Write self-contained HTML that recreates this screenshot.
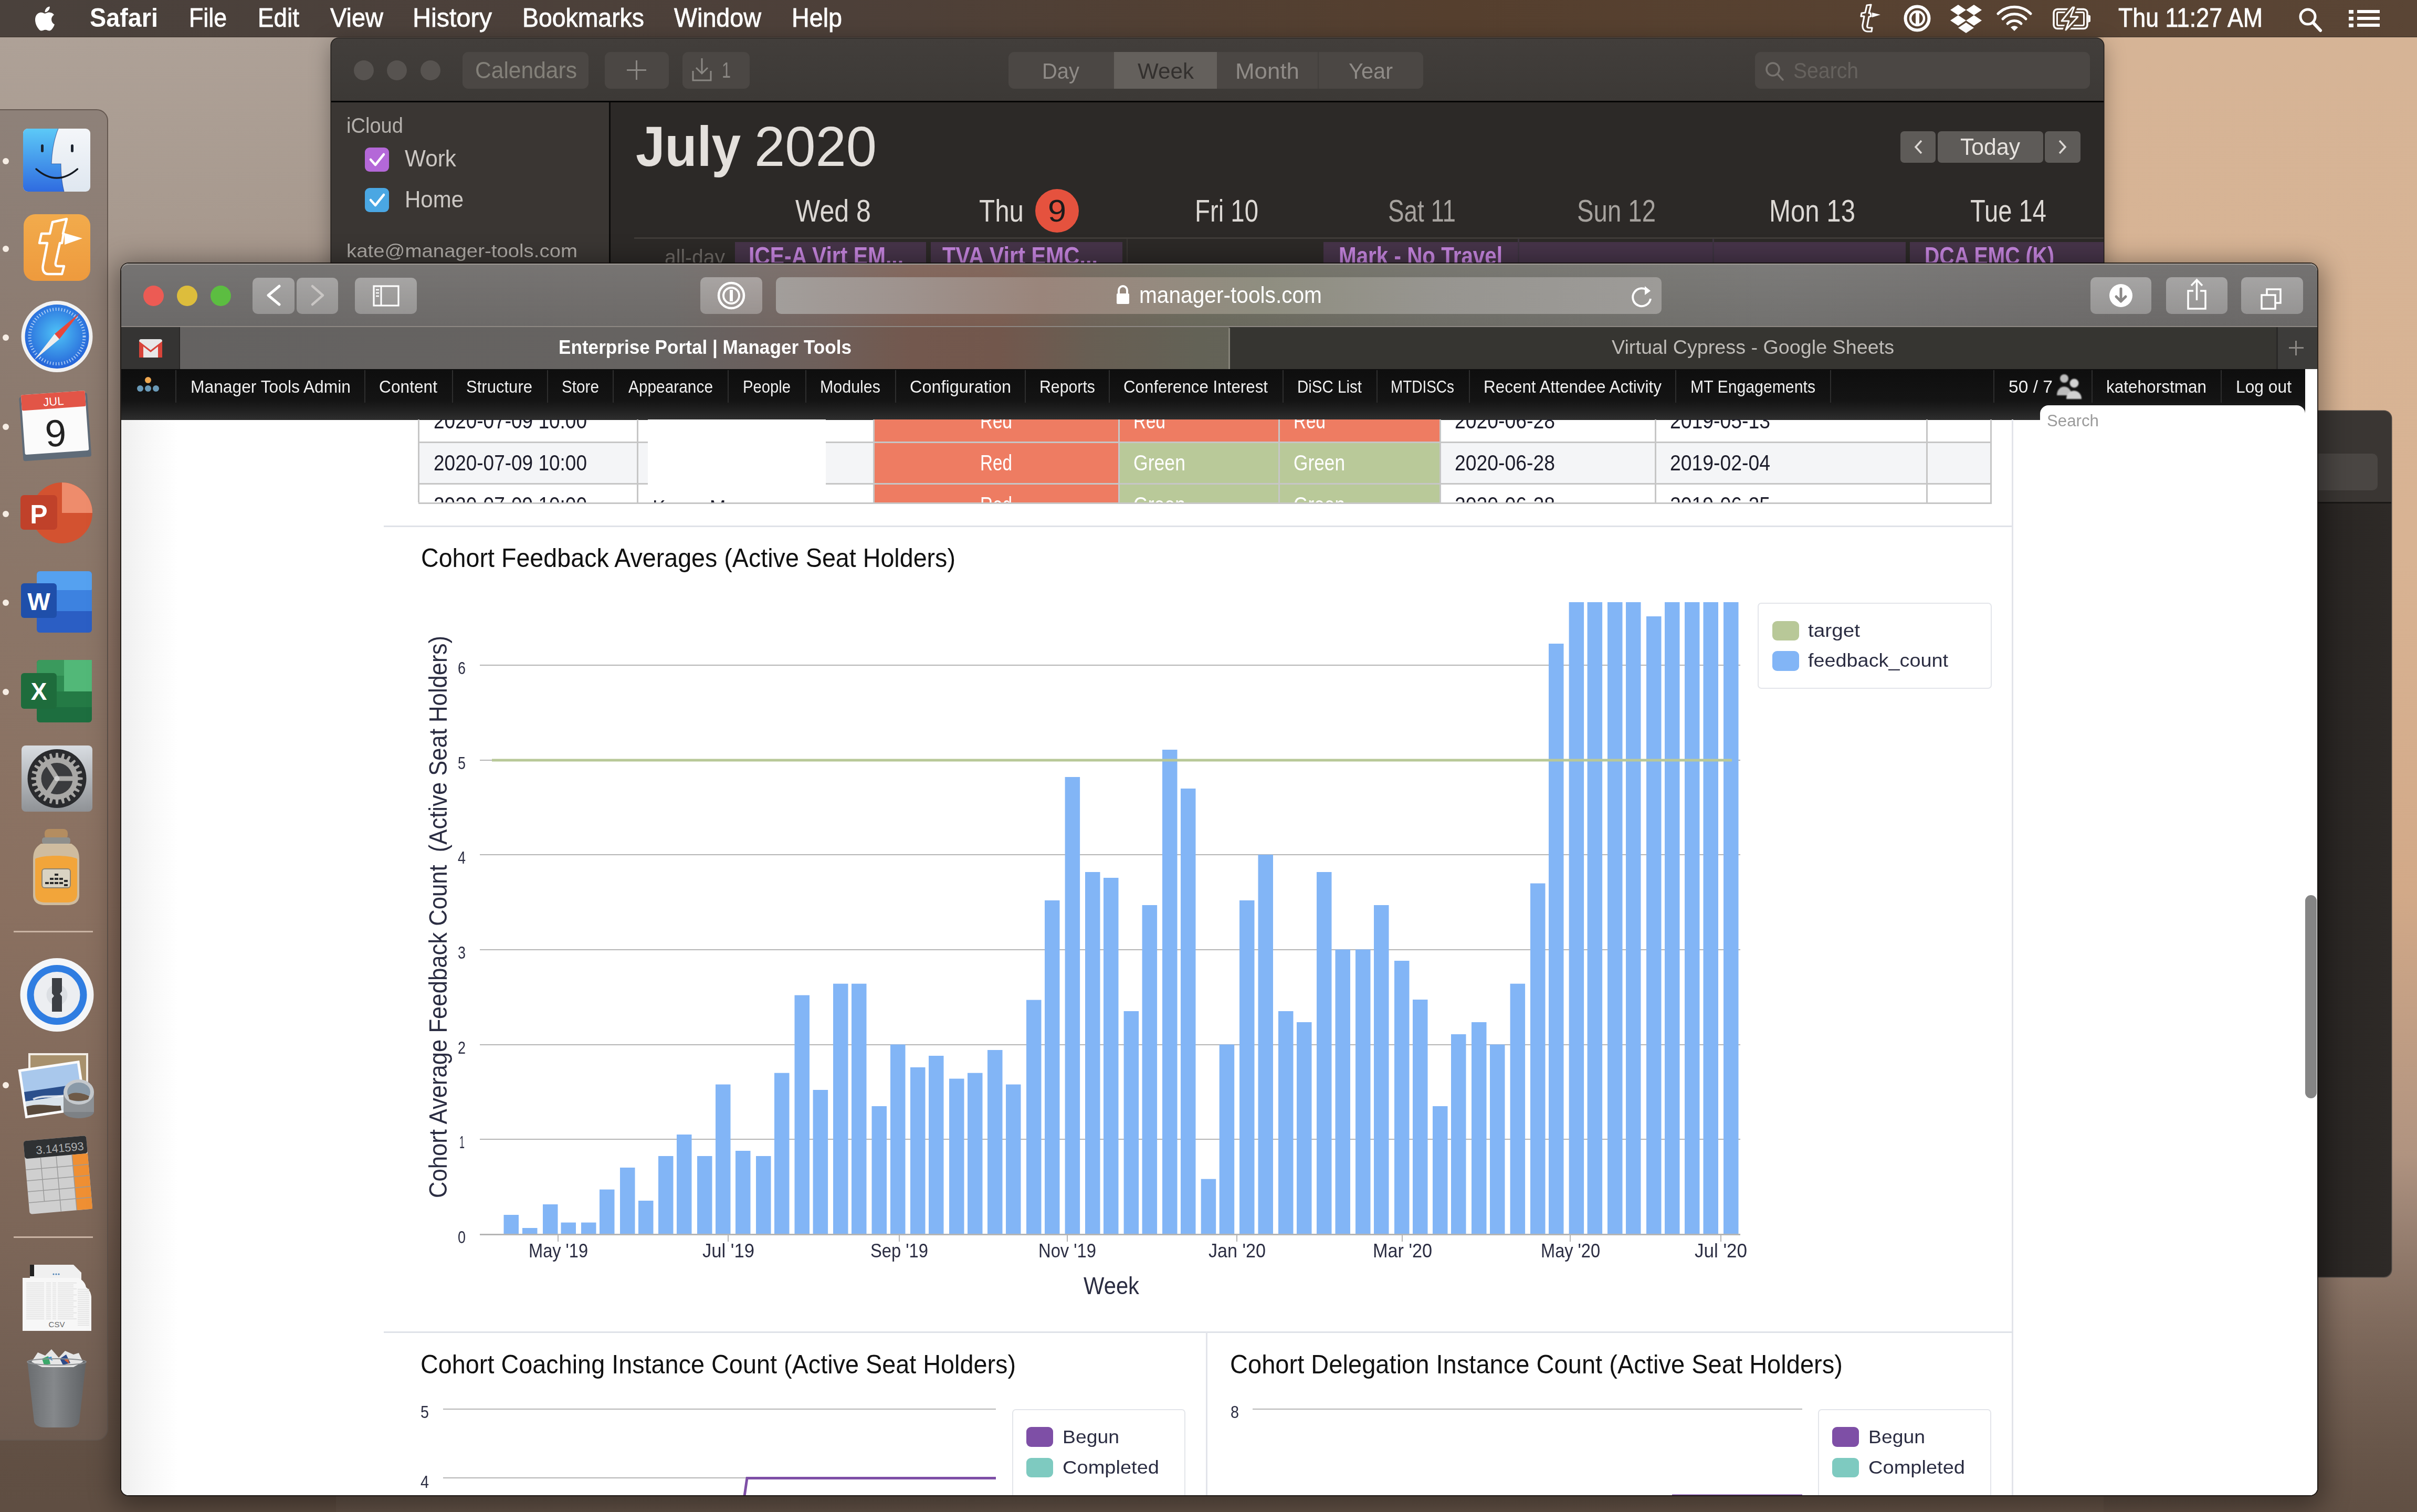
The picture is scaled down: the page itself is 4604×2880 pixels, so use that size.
<!DOCTYPE html><html><head><meta charset="utf-8"><style>*{margin:0;padding:0}html,body{width:4604px;height:2880px;overflow:hidden;background:#8a7a70}
.b{position:absolute}.t{position:absolute;white-space:pre;transform-origin:0 0;font-family:'Liberation Sans',sans-serif}</style></head><body><div class="b" style="left:0px;top:0px;width:4604px;height:2880px;background:linear-gradient(90deg,#a89a90 0%,#ad9e92 40%,#c4a68a 75%,#d2b090 100%);"></div><div class="b" style="left:0px;top:70px;width:640px;height:2810px;background:linear-gradient(180deg,#aea197 0%,#a89a8f 12%,#94796a 40%,#8a6e5e 60%,#7a6254 80%,#5e4d42 100%);"></div><div class="b" style="left:4007px;top:70px;width:597px;height:2810px;background:linear-gradient(180deg,#d6b496 0%,#d8b393 35%,#d2a988 58%,#a88e7e 80%,#7e6a5c 100%);"></div><div class="b" style="left:0px;top:2200px;width:4604px;height:680px;background:linear-gradient(180deg,rgba(90,70,58,0) 0%,rgba(100,82,70,0.5) 50%,rgba(95,78,66,0.95) 100%);"></div><div class="b" style="left:0px;top:0px;width:4604px;height:70px;background:linear-gradient(90deg,#4a413c 0%,#4d4039 35%,#553f2e 60%,#5a4535 100%);border-bottom:1px solid #3a302a;"></div><svg class="b" style="left:58px;top:6px" width="58" height="58" viewBox="0 0 50 50"><path fill="#fff" d="M34.5 26.6c0-5 4.1-7.4 4.3-7.5-2.3-3.4-5.9-3.9-7.2-3.9-3.1-.3-6 1.8-7.5 1.8-1.6 0-4-1.8-6.5-1.7-3.4 0-6.5 2-8.2 5-3.5 6.1-.9 15.1 2.5 20 1.7 2.4 3.6 5.1 6.2 5 2.5-.1 3.4-1.6 6.4-1.6s3.8 1.6 6.4 1.6c2.7 0 4.4-2.4 6-4.8 1.9-2.8 2.7-5.5 2.7-5.6-.1 0-5.1-2-5.1-8.3zM29.6 11.9c1.4-1.7 2.3-4 2.1-6.3-2 .1-4.4 1.3-5.8 3-1.3 1.5-2.4 3.9-2.1 6.2 2.2.2 4.4-1.1 5.8-2.9z"/></svg><div class="t" style="left:171.0px;top:9.0px;font-size:50.00px;line-height:50.00px;color:#fff;font-family:'Liberation Sans',sans-serif;font-weight:700;transform:scaleX(0.9355);">Safari</div><div class="t" style="left:360.0px;top:9.0px;font-size:50.00px;line-height:50.00px;color:#fff;font-family:'Liberation Sans',sans-serif;transform:scaleX(0.8935);-webkit-text-stroke:0.8px #fff;">File</div><div class="t" style="left:491.0px;top:9.0px;font-size:50.00px;line-height:50.00px;color:#fff;font-family:'Liberation Sans',sans-serif;transform:scaleX(0.9168);-webkit-text-stroke:0.8px #fff;">Edit</div><div class="t" style="left:629.0px;top:9.0px;font-size:50.00px;line-height:50.00px;color:#fff;font-family:'Liberation Sans',sans-serif;transform:scaleX(0.9397);-webkit-text-stroke:0.8px #fff;">View</div><div class="t" style="left:786.0px;top:9.0px;font-size:50.00px;line-height:50.00px;color:#fff;font-family:'Liberation Sans',sans-serif;transform:scaleX(0.9706);-webkit-text-stroke:0.8px #fff;">History</div><div class="t" style="left:995.0px;top:9.0px;font-size:50.00px;line-height:50.00px;color:#fff;font-family:'Liberation Sans',sans-serif;transform:scaleX(0.9277);-webkit-text-stroke:0.8px #fff;">Bookmarks</div><div class="t" style="left:1284.0px;top:9.0px;font-size:50.00px;line-height:50.00px;color:#fff;font-family:'Liberation Sans',sans-serif;transform:scaleX(0.9334);-webkit-text-stroke:0.8px #fff;">Window</div><div class="t" style="left:1508.0px;top:9.0px;font-size:50.00px;line-height:50.00px;color:#fff;font-family:'Liberation Sans',sans-serif;transform:scaleX(0.9335);-webkit-text-stroke:0.8px #fff;">Help</div><div class="t" style="left:4035.0px;top:9.0px;font-size:50.00px;line-height:50.00px;color:#fff;font-family:'Liberation Sans',sans-serif;transform:scaleX(0.8940);-webkit-text-stroke:0.8px #fff;">Thu 11:27 AM</div><svg class="b" style="left:3520px;top:0px" width="480" height="70" viewBox="0 0 480 70">
<g fill="none" stroke="#fff" stroke-width="3.2" stroke-linejoin="round">
<path d="M44 9 L36 10 L33 24 L26 25 L25 31 L31 31 L28 47 C27 55 31 60 38 60 L45 60 L46 53 L40 53 C37 53 36 51 37 48 L40 32 L44 31 L43 25 L40 25 Z"/>
</g>
<path fill="#fff" d="M46 24 L62 28 L46 33 Z"/>
<circle cx="132" cy="35" r="22.5" fill="none" stroke="#fff" stroke-width="6"/>
<circle cx="132" cy="35" r="13" fill="none" stroke="#fff" stroke-width="4.5"/>
<rect x="129" y="22" width="7" height="24" fill="#fff"/>
<g fill="#fff">
<path d="M195 19 L210 9 L225 19 L210 29 Z"/><path d="M225 19 L240 9 L255 19 L240 29 Z"/>
<path d="M195 39 L210 29 L225 39 L210 49 Z"/><path d="M225 39 L240 29 L255 39 L240 49 Z"/>
<path d="M210 53 L225 43 L240 53 L225 63 Z"/>
</g>
<g fill="none" stroke="#fff" stroke-width="5" stroke-linecap="round">
<path d="M286 26 A44 44 0 0 1 348 26"/><path d="M295 36 A31 31 0 0 1 339 36"/><path d="M304 45 A18 18 0 0 1 330 45"/>
</g>
<path fill="#fff" d="M310 52 L317 59 L324 52 A10 10 0 0 0 310 52 Z"/>
<rect x="392" y="17.5" width="64" height="37" rx="7" fill="none" stroke="#fff" stroke-width="3.5"/>
<rect x="398.5" y="23.5" width="51" height="25" rx="2.5" fill="none" stroke="#fff" stroke-width="3"/>
<path d="M428 12 L406 41 L420 41 L413 60 L440 31 L425 31 L433 12 Z" fill="#5a4432" stroke="#5a4432" stroke-width="9" stroke-linejoin="round"/>
<path d="M428 14 L407 40 L421 40 L415 57 L438 32 L424 32 L431 14 Z" fill="#5a4432" stroke="#fff" stroke-width="3" stroke-linejoin="round"/>
<path fill="#fff" d="M458 28 L462 30 L462 41 L458 43 Z"/>
</svg><svg class="b" style="left:4370px;top:0px" width="180" height="70" viewBox="0 0 180 70">
<circle cx="26" cy="32" r="14" fill="none" stroke="#fff" stroke-width="5"/>
<path d="M36 43 L50 58" stroke="#fff" stroke-width="6" stroke-linecap="round"/>
<g fill="#fff"><rect x="104" y="19" width="9" height="7"/><rect x="104" y="32" width="9" height="7"/><rect x="104" y="45" width="9" height="7"/>
<rect x="120" y="19" width="43" height="6"/><rect x="120" y="32" width="43" height="6"/><rect x="120" y="45" width="43" height="6"/></g>
</svg><div class="b" style="left:-20px;top:208px;width:226px;height:2536px;background:linear-gradient(180deg,#8e8179 0%,#8b7668 35%,#8a7060 60%,#7c6658 85%,#6e5c51 100%);border:2px solid #655850;border-radius:22px;box-sizing:border-box;"></div><div class="b" style="left:5px;top:301px;width:12px;height:12px;border-radius:6px;background:#f6ede4"></div><div class="b" style="left:5px;top:468px;width:12px;height:12px;border-radius:6px;background:#f6ede4"></div><div class="b" style="left:5px;top:637px;width:12px;height:12px;border-radius:6px;background:#f6ede4"></div><div class="b" style="left:5px;top:807px;width:12px;height:12px;border-radius:6px;background:#f6ede4"></div><div class="b" style="left:5px;top:973px;width:12px;height:12px;border-radius:6px;background:#f6ede4"></div><div class="b" style="left:5px;top:1142px;width:12px;height:12px;border-radius:6px;background:#f6ede4"></div><div class="b" style="left:5px;top:1312px;width:12px;height:12px;border-radius:6px;background:#f6ede4"></div><div class="b" style="left:5px;top:2061px;width:12px;height:12px;border-radius:6px;background:#f6ede4"></div><div class="b" style="left:26px;top:1773px;width:151px;height:3px;background:#c9b3a3;"></div><div class="b" style="left:26px;top:2355px;width:151px;height:3px;background:#c9b3a3;"></div><svg class="b" style="left:0px;top:0px" width="206" height="2744" viewBox="0 0 206 2744">
<defs>
<linearGradient id="fb" x1="0" y1="0" x2="0" y2="1"><stop offset="0" stop-color="#5cc9f7"/><stop offset="1" stop-color="#2f6be0"/></linearGradient>
<linearGradient id="fw" x1="0" y1="0" x2="0" y2="1"><stop offset="0" stop-color="#f4f6f9"/><stop offset="1" stop-color="#dfe7f0"/></linearGradient>
<linearGradient id="ty" x1="0" y1="0" x2="0" y2="1"><stop offset="0" stop-color="#f2ab4c"/><stop offset="1" stop-color="#ee9a3d"/></linearGradient>
<radialGradient id="sf" cx="0.5" cy="0.45" r="0.55"><stop offset="0" stop-color="#4fc3f7"/><stop offset="1" stop-color="#2563d8"/></radialGradient>
<linearGradient id="sp" x1="0" y1="0" x2="0" y2="1"><stop offset="0" stop-color="#d9dde2"/><stop offset="1" stop-color="#8f9296"/></linearGradient>
<linearGradient id="jar" x1="0" y1="0" x2="0" y2="1"><stop offset="0" stop-color="#e8dccb"/><stop offset="0.45" stop-color="#f3b646"/><stop offset="1" stop-color="#e4852a"/></linearGradient>
<linearGradient id="tr" x1="0" y1="0" x2="0" y2="1"><stop offset="0" stop-color="#8c8f93"/><stop offset="1" stop-color="#5d6064"/></linearGradient>
</defs>
<!-- finder -->
<rect x="44" y="245" width="128" height="120" rx="9" fill="url(#fw)"/>
<path d="M53 245 L111 245 C104 262 99 285 98 312 L116 312 C116 330 118 350 122 365 L53 365 A9 9 0 0 1 44 356 L44 254 A9 9 0 0 1 53 245 Z" fill="url(#fb)"/>
<path d="M111 245 C104 262 99 285 98 312 L116 312 C116 330 118 350 122 365" fill="none" stroke="#1f3c80" stroke-width="1.2" opacity="0.6"/>
<rect x="78" y="275" width="5" height="15" rx="2.5" fill="#1c2430"/><rect x="135" y="275" width="5" height="15" rx="2.5" fill="#1c2430"/>
<path d="M69 322 Q108 356 147.5 322" fill="none" stroke="#141a22" stroke-width="3.5" stroke-linecap="round"/>
<!-- tyme -->
<rect x="45" y="408" width="127" height="127" rx="22" fill="url(#ty)"/>
<path d="M100 423 L127 417 L120 445 L121 445 L118 463 L114 463 L106 500 C105 506 107 507 111 507 L122 507 L118 522 L92 522 C84 522 80 515 82 505 L90 463 L75 463 L79 445 L95 445 Z" fill="none" stroke="#fff" stroke-width="4.5" stroke-linejoin="round"/>
<path d="M123 444 L157 454 L123 466 Z" fill="#fff"/>
<!-- safari -->
<circle cx="108.5" cy="641" r="68" fill="#f2f2f2"/><circle cx="108.5" cy="641" r="61" fill="url(#sf)"/>
<circle cx="108.5" cy="641" r="52" fill="none" stroke="#e8f4ff" stroke-width="6" stroke-dasharray="1.5 4" opacity="0.8"/>
<path d="M152 596 L113 646 L104 636 Z" fill="#e8473a"/><path d="M65 686 L104 636 L113 646 Z" fill="#eeeeee"/>
<!-- calendar -->
<g transform="rotate(-4 106 810)">
<rect x="40" y="752" width="130" height="122" rx="4" fill="#5f6b78"/>
<rect x="44" y="748" width="122" height="114" rx="3" fill="#fbfbfb"/>
<rect x="44" y="748" width="122" height="30" rx="3" fill="#e25547"/>
<text x="105" y="772" font-family="Liberation Sans" font-size="22" fill="#fff" text-anchor="middle">JUL</text>
<text x="105" y="850" font-family="Liberation Sans" font-size="72" fill="#222" text-anchor="middle">9</text>
</g>
<!-- powerpoint -->
<circle cx="118" cy="977" r="58" fill="#d35230"/>
<path d="M118 919 A58 58 0 0 1 176 977 L118 977 Z" fill="#ee8c6c"/>
<rect x="39" y="943" width="70" height="66" rx="7" fill="#c0412a"/>
<text x="74" y="997" font-family="Liberation Sans" font-weight="700" font-size="50" fill="#fff" text-anchor="middle">P</text>
<!-- word -->
<rect x="70" y="1088" width="105" height="117" rx="6" fill="#2b5ec4"/>
<rect x="70" y="1088" width="105" height="40" rx="6" fill="#55a1f0"/><rect x="70" y="1124" width="105" height="40" fill="#3d82e0"/>
<rect x="40" y="1111" width="68" height="66" rx="6" fill="#1f4faa"/>
<text x="74" y="1162" font-family="Liberation Sans" font-weight="700" font-size="46" fill="#fff" text-anchor="middle">W</text>
<!-- excel -->
<rect x="70" y="1257" width="105" height="119" rx="6" fill="#1d6e3f"/>
<rect x="70" y="1257" width="105" height="30" rx="6" fill="#3a9a5d"/><rect x="122" y="1257" width="53" height="60" fill="#52b878"/><rect x="70" y="1287" width="52" height="30" fill="#2d8a50"/><rect x="70" y="1317" width="105" height="30" fill="#247a45"/>
<rect x="40" y="1282" width="68" height="68" rx="6" fill="#1e6c3c"/>
<text x="74" y="1333" font-family="Liberation Sans" font-weight="700" font-size="46" fill="#fff" text-anchor="middle">X</text>
<!-- system prefs -->
<rect x="41" y="1420" width="135" height="126" rx="8" fill="url(#sp)"/>
<circle cx="108.5" cy="1483" r="56" fill="#2a2b2e"/>
<path d="M148.2 1477.8 L148.4 1480.1 L157.5 1480.9 L157.5 1485.1 L148.4 1485.9 L148.2 1488.2 L147.8 1490.5 L156.3 1493.7 L155.3 1497.7 L146.3 1496.2 L145.5 1498.3 L144.5 1500.4 L151.9 1505.7 L149.9 1509.3 L141.6 1505.5 L140.2 1507.4 L138.8 1509.1 L144.6 1516.2 L141.7 1519.1 L134.6 1513.3 L132.9 1514.7 L131.0 1516.1 L134.8 1524.4 L131.2 1526.4 L125.9 1519.0 L123.8 1520.0 L121.7 1520.8 L123.2 1529.8 L119.2 1530.8 L116.0 1522.3 L113.7 1522.7 L111.4 1522.9 L110.6 1532.0 L106.4 1532.0 L105.6 1522.9 L103.3 1522.7 L101.0 1522.3 L97.8 1530.8 L93.8 1529.8 L95.3 1520.8 L93.2 1520.0 L91.1 1519.0 L85.8 1526.4 L82.2 1524.4 L86.0 1516.1 L84.1 1514.7 L82.4 1513.3 L75.3 1519.1 L72.4 1516.2 L78.2 1509.1 L76.8 1507.4 L75.4 1505.5 L67.1 1509.3 L65.1 1505.7 L72.5 1500.4 L71.5 1498.3 L70.7 1496.2 L61.7 1497.7 L60.7 1493.7 L69.2 1490.5 L68.8 1488.2 L68.6 1485.9 L59.5 1485.1 L59.5 1480.9 L68.6 1480.1 L68.8 1477.8 L69.2 1475.5 L60.7 1472.3 L61.7 1468.3 L70.7 1469.8 L71.5 1467.7 L72.5 1465.6 L65.1 1460.3 L67.1 1456.7 L75.4 1460.5 L76.8 1458.6 L78.2 1456.9 L72.4 1449.8 L75.3 1446.9 L82.4 1452.7 L84.1 1451.3 L86.0 1449.9 L82.2 1441.6 L85.8 1439.6 L91.1 1447.0 L93.2 1446.0 L95.3 1445.2 L93.8 1436.2 L97.8 1435.2 L101.0 1443.7 L103.3 1443.3 L105.6 1443.1 L106.4 1434.0 L110.6 1434.0 L111.4 1443.1 L113.7 1443.3 L116.0 1443.7 L119.2 1435.2 L123.2 1436.2 L121.7 1445.2 L123.8 1446.0 L125.9 1447.0 L131.2 1439.6 L134.8 1441.6 L131.0 1449.9 L132.9 1451.3 L134.6 1452.7 L141.7 1446.9 L144.6 1449.8 L138.8 1456.9 L140.2 1458.6 L141.6 1460.5 L149.9 1456.7 L151.9 1460.3 L144.5 1465.6 L145.5 1467.7 L146.3 1469.8 L155.3 1468.3 L156.3 1472.3 L147.8 1475.5 Z" fill="#a9a8a6"/>
<circle cx="108.5" cy="1483" r="33" fill="#3a3b3e"/>
<circle cx="108.5" cy="1483" r="33" fill="none" stroke="#a9a8a6" stroke-width="6"/>
<path d="M108.5 1483 L91 1455 M108.5 1483 L141 1483 M108.5 1483 L91 1511" stroke="#a9a8a6" stroke-width="9"/>
<circle cx="108.5" cy="1483" r="5" fill="#d0d0d0"/>
<!-- jar -->
<rect x="85" y="1579" width="44" height="20" rx="8" fill="#b48d60"/>
<rect x="80" y="1595" width="54" height="13" rx="5" fill="#8e8f8c"/>
<path d="M78 1607 L136 1607 C150 1616 151 1626 151 1642 L151 1705 C151 1718 142 1724 128 1724 L86 1724 C72 1724 63 1718 63 1705 L63 1642 C63 1626 64 1616 78 1607 Z" fill="#d6c4a6" opacity="0.9"/>
<path d="M67 1636 C80 1628 134 1628 147 1636 L147 1703 C147 1714 140 1719 128 1719 L86 1719 C74 1719 67 1714 67 1703 Z" fill="#f2a53a"/>
<rect x="80" y="1655" width="54" height="36" rx="5" fill="#d9d3c3" stroke="#8f8470" stroke-width="2"/>
<g fill="#2c2c2c"><rect x="86" y="1680" width="7" height="4"/><rect x="95" y="1672" width="7" height="4"/><rect x="95" y="1680" width="7" height="4"/><rect x="104" y="1664" width="7" height="4"/><rect x="104" y="1672" width="7" height="4"/><rect x="104" y="1680" width="7" height="4"/><rect x="113" y="1672" width="7" height="4"/><rect x="113" y="1680" width="7" height="4"/><rect x="122" y="1676" width="7" height="4"/><rect x="122" y="1684" width="7" height="4"/></g>
<!-- 1password -->
<circle cx="108.5" cy="1895" r="70" fill="#f4f6f8"/><circle cx="108.5" cy="1895" r="57" fill="#2f7de1"/><circle cx="108.5" cy="1895" r="44" fill="#eceef1"/>
<circle cx="108.5" cy="1895" r="20" fill="#dcdfe3"/>
<path d="M99 1863 L118 1863 L118 1888 L114 1893 L118 1898 L118 1927 L99 1927 L99 1902 L103 1897 L99 1892 Z" fill="#3c3f44"/>
<!-- preview -->
<rect x="54" y="2006" width="114" height="85" fill="#f2ede6"/><rect x="58" y="2010" width="106" height="77" fill="#a8916d"/>
<g transform="rotate(-8.5 100 2070)">
<rect x="40" y="2028" width="118" height="94" fill="#fbfbfb"/>
<rect x="45" y="2033" width="108" height="84" fill="#a9c8ec"/>
<rect x="45" y="2072" width="108" height="18" fill="#2b4f8c"/>
<path d="M45 2090 L153 2090 L153 2117 L45 2117 Z" fill="#d9e2ea"/>
<path d="M45 2100 C70 2096 90 2106 110 2108 L110 2117 L45 2117 Z" fill="#5a4a3c"/>
<path d="M60 2088 C80 2082 100 2092 130 2090" fill="none" stroke="#ffffff" stroke-width="4" opacity="0.8"/>
</g>
<ellipse cx="150" cy="2118" rx="29" ry="12" fill="#7d8185"/>
<rect x="121" y="2080" width="58" height="38" fill="#8e9296"/>
<ellipse cx="150" cy="2080" rx="29" ry="24" fill="#c5c9cd"/>
<ellipse cx="150" cy="2080" rx="22" ry="18" fill="#8a9aa8"/>
<path d="M130 2086 C140 2078 158 2082 170 2088 L168 2094 C158 2098 140 2098 132 2094 Z" fill="#6e5a48"/>
<!-- calculator -->
<g transform="rotate(-5 110 2235)">
<rect x="50" y="2168" width="120" height="140" rx="5" fill="#cfcfcf"/>
<rect x="50" y="2168" width="120" height="34" rx="5" fill="#2f3133"/>
<text x="164" y="2195" font-family="Liberation Sans" font-size="22" fill="#aeb0b2" text-anchor="end">3.141593</text>
<rect x="140" y="2202" width="30" height="106" fill="#ef8f33"/>
<g stroke="#9a9a9a" stroke-width="1.5"><path d="M50 2223 L170 2223 M50 2244 L170 2244 M50 2265 L170 2265 M50 2286 L170 2286"/><path d="M80 2202 L80 2286 M110 2202 L110 2308 M140 2202 L140 2308"/></g>
</g>
<!-- csv -->
<path d="M57 2409 L140 2409 L155 2424 L155 2440 L57 2440 Z" fill="#f0f0f0"/>
<rect x="57" y="2409" width="8" height="22" fill="#222"/>
<g fill="#4a7fb5"><circle cx="102" cy="2427" r="1.6"/><circle cx="107" cy="2427" r="1.6"/><circle cx="112" cy="2427" r="1.6"/></g>
<path d="M43 2434 L150 2434 C160 2440 163 2446 164 2452 C170 2456 173 2462 174 2470 L174 2535 L43 2535 Z" fill="#f7f7f7"/>
<g fill="#dedede"><rect x="50" y="2443.0" width="34" height="1.4"/><rect x="88" y="2443.0" width="9" height="1.4"/><rect x="100" y="2443.0" width="7" height="1.4"/><rect x="110" y="2443.0" width="36" height="1.4"/><rect x="148" y="2455.0" width="22" height="1.4"/><rect x="50" y="2446.8" width="34" height="1.4"/><rect x="88" y="2446.8" width="9" height="1.4"/><rect x="100" y="2446.8" width="7" height="1.4"/><rect x="110" y="2446.8" width="30" height="1.4"/><rect x="148" y="2458.8" width="22" height="1.4"/><rect x="50" y="2450.6" width="34" height="1.4"/><rect x="88" y="2450.6" width="9" height="1.4"/><rect x="100" y="2450.6" width="7" height="1.4"/><rect x="110" y="2450.6" width="30" height="1.4"/><rect x="148" y="2462.6" width="22" height="1.4"/><rect x="50" y="2454.4" width="34" height="1.4"/><rect x="88" y="2454.4" width="9" height="1.4"/><rect x="100" y="2454.4" width="7" height="1.4"/><rect x="110" y="2454.4" width="36" height="1.4"/><rect x="148" y="2466.4" width="22" height="1.4"/><rect x="50" y="2458.2" width="34" height="1.4"/><rect x="88" y="2458.2" width="9" height="1.4"/><rect x="100" y="2458.2" width="7" height="1.4"/><rect x="110" y="2458.2" width="30" height="1.4"/><rect x="148" y="2470.2" width="22" height="1.4"/><rect x="50" y="2462.0" width="34" height="1.4"/><rect x="88" y="2462.0" width="9" height="1.4"/><rect x="100" y="2462.0" width="7" height="1.4"/><rect x="110" y="2462.0" width="30" height="1.4"/><rect x="148" y="2474.0" width="22" height="1.4"/><rect x="50" y="2465.8" width="34" height="1.4"/><rect x="88" y="2465.8" width="9" height="1.4"/><rect x="100" y="2465.8" width="7" height="1.4"/><rect x="110" y="2465.8" width="36" height="1.4"/><rect x="148" y="2477.8" width="22" height="1.4"/><rect x="50" y="2469.6" width="34" height="1.4"/><rect x="88" y="2469.6" width="9" height="1.4"/><rect x="100" y="2469.6" width="7" height="1.4"/><rect x="110" y="2469.6" width="30" height="1.4"/><rect x="148" y="2481.6" width="22" height="1.4"/><rect x="50" y="2473.4" width="34" height="1.4"/><rect x="88" y="2473.4" width="9" height="1.4"/><rect x="100" y="2473.4" width="7" height="1.4"/><rect x="110" y="2473.4" width="30" height="1.4"/><rect x="148" y="2485.4" width="22" height="1.4"/><rect x="50" y="2477.2" width="34" height="1.4"/><rect x="88" y="2477.2" width="9" height="1.4"/><rect x="100" y="2477.2" width="7" height="1.4"/><rect x="110" y="2477.2" width="36" height="1.4"/><rect x="148" y="2489.2" width="22" height="1.4"/><rect x="50" y="2481.0" width="34" height="1.4"/><rect x="88" y="2481.0" width="9" height="1.4"/><rect x="100" y="2481.0" width="7" height="1.4"/><rect x="110" y="2481.0" width="30" height="1.4"/><rect x="148" y="2493.0" width="22" height="1.4"/><rect x="50" y="2484.8" width="34" height="1.4"/><rect x="88" y="2484.8" width="9" height="1.4"/><rect x="100" y="2484.8" width="7" height="1.4"/><rect x="110" y="2484.8" width="30" height="1.4"/><rect x="148" y="2496.8" width="22" height="1.4"/><rect x="50" y="2488.6" width="34" height="1.4"/><rect x="88" y="2488.6" width="9" height="1.4"/><rect x="100" y="2488.6" width="7" height="1.4"/><rect x="110" y="2488.6" width="36" height="1.4"/><rect x="148" y="2500.6" width="22" height="1.4"/><rect x="50" y="2492.4" width="34" height="1.4"/><rect x="88" y="2492.4" width="9" height="1.4"/><rect x="100" y="2492.4" width="7" height="1.4"/><rect x="110" y="2492.4" width="30" height="1.4"/><rect x="148" y="2504.4" width="22" height="1.4"/><rect x="50" y="2496.2" width="34" height="1.4"/><rect x="88" y="2496.2" width="9" height="1.4"/><rect x="100" y="2496.2" width="7" height="1.4"/><rect x="110" y="2496.2" width="30" height="1.4"/><rect x="148" y="2508.2" width="22" height="1.4"/><rect x="50" y="2500.0" width="34" height="1.4"/><rect x="88" y="2500.0" width="9" height="1.4"/><rect x="100" y="2500.0" width="7" height="1.4"/><rect x="110" y="2500.0" width="36" height="1.4"/><rect x="148" y="2512.0" width="22" height="1.4"/><rect x="50" y="2503.8" width="34" height="1.4"/><rect x="88" y="2503.8" width="9" height="1.4"/><rect x="100" y="2503.8" width="7" height="1.4"/><rect x="110" y="2503.8" width="30" height="1.4"/><rect x="148" y="2515.8" width="22" height="1.4"/><rect x="50" y="2507.6" width="34" height="1.4"/><rect x="88" y="2507.6" width="9" height="1.4"/><rect x="100" y="2507.6" width="7" height="1.4"/><rect x="110" y="2507.6" width="30" height="1.4"/><rect x="148" y="2519.6" width="22" height="1.4"/><rect x="50" y="2511.4" width="34" height="1.4"/><rect x="88" y="2511.4" width="9" height="1.4"/><rect x="100" y="2511.4" width="7" height="1.4"/><rect x="110" y="2511.4" width="36" height="1.4"/><rect x="148" y="2523.4" width="22" height="1.4"/></g>
<text x="108" y="2528" font-family="Liberation Sans" font-size="15" fill="#6a6a6a" text-anchor="middle">CSV</text>
<!-- trash -->
<linearGradient id="tr2" x1="0" y1="0" x2="1" y2="0"><stop offset="0" stop-color="#6a6d70"/><stop offset="0.45" stop-color="#85888b"/><stop offset="1" stop-color="#5f6265"/></linearGradient>
<path d="M52 2592 L164 2592 L151 2708 C149 2716 140 2719 128 2719 L88 2719 C76 2719 67 2716 65 2708 Z" fill="url(#tr2)"/>
<path d="M60 2594 L72 2576 L86 2582 L98 2570 L112 2586 L124 2573 L140 2580 L150 2577 L158 2594 L140 2604 L80 2604 Z" fill="#e6e6e6"/>
<path d="M80 2588 L92 2583 L96 2598 L84 2600 Z" fill="#3aa86a"/><path d="M90 2586 L98 2584 L100 2592 Z" fill="#3a8fd0"/>
<path d="M114 2588 L126 2580 L134 2596 L120 2600 Z" fill="#2d4b8a"/><path d="M122 2590 L130 2588 L132 2598 Z" fill="#d0603a"/>
<ellipse cx="108" cy="2594" rx="56" ry="6" fill="none" stroke="#8c8f92" stroke-width="2"/>
</svg><div class="b" style="left:631px;top:73px;width:3376px;height:627px;background:#2c2927;border-radius:14px 14px 0 0;box-shadow:0 0 0 1.5px #1e1b19, 0 10px 40px rgba(0,0,0,0.35);"></div><div class="b" style="left:631px;top:73px;width:3376px;height:122px;background:linear-gradient(180deg,#423e3b,#3c3936);border-radius:14px 14px 0 0;border-bottom:3px solid #050505;box-sizing:border-box;"></div><div class="b" style="left:674px;top:115px;width:38px;height:38px;border-radius:19px;background:#575350"></div><div class="b" style="left:737px;top:115px;width:38px;height:38px;border-radius:19px;background:#575350"></div><div class="b" style="left:801px;top:115px;width:38px;height:38px;border-radius:19px;background:#575350"></div><div class="b" style="left:881px;top:99px;width:240px;height:70px;background:#4b4744;border-radius:11px;"></div><div class="t" style="left:905.0px;top:113.0px;font-size:43.48px;line-height:43.48px;color:#838079;font-family:'Liberation Sans',sans-serif;transform:scaleX(0.9791);">Calendars</div><div class="b" style="left:1152px;top:99px;width:122px;height:70px;background:#4b4744;border-radius:11px;"></div><div class="b" style="left:1194px;top:132px;width:37px;height:3px;background:#8a8783;"></div><div class="b" style="left:1211px;top:115px;width:3px;height:37px;background:#8a8783;"></div><div class="b" style="left:1300px;top:99px;width:128px;height:70px;background:#4b4744;border-radius:11px;"></div><svg class="b" style="left:1300px;top:99px" width="128" height="70"><g fill="none" stroke="#8a8783" stroke-width="3"><path d="M37 12 L37 40 M26 30 L37 41 L48 30"/><path d="M20 36 L20 54 L54 54 L54 36"/></g></svg><div class="t" style="left:1375.0px;top:113.3px;font-size:42.03px;line-height:42.03px;color:#8a8783;font-family:'Liberation Sans',sans-serif;transform:scaleX(0.7273);">1</div><div class="b" style="left:1921px;top:99px;width:790px;height:70px;background:#4b4744;border-radius:11px;"></div><div class="b" style="left:2122px;top:99px;width:196px;height:70px;background:#64605c;"></div><div class="b" style="left:2510px;top:99px;width:2px;height:70px;background:#423f3c;"></div><div class="t" style="left:1984.5px;top:115.3px;font-size:42.03px;line-height:42.03px;color:#8f8b87;font-family:'Liberation Sans',sans-serif;transform:scaleX(0.9502);">Day</div><div class="t" style="left:2166.5px;top:115.3px;font-size:42.03px;line-height:42.03px;color:#33302e;font-family:'Liberation Sans',sans-serif;transform:scaleX(1.0034);">Week</div><div class="t" style="left:2353.0px;top:115.3px;font-size:42.03px;line-height:42.03px;color:#8f8b87;font-family:'Liberation Sans',sans-serif;transform:scaleX(1.0447);">Month</div><div class="t" style="left:2569.0px;top:115.3px;font-size:42.03px;line-height:42.03px;color:#8f8b87;font-family:'Liberation Sans',sans-serif;transform:scaleX(0.9893);">Year</div><div class="b" style="left:3343px;top:99px;width:638px;height:70px;background:#4b4744;border-radius:11px;"></div><svg class="b" style="left:3343px;top:99px" width="80" height="70"><circle cx="34" cy="33" r="12" fill="none" stroke="#77736f" stroke-width="3.5"/><path d="M43 42 L53 53" stroke="#77736f" stroke-width="3.5" stroke-linecap="round"/></svg><div class="t" style="left:3416.0px;top:114.3px;font-size:42.03px;line-height:42.03px;color:#66625e;font-family:'Liberation Sans',sans-serif;transform:scaleX(0.9315);">Search</div><div class="b" style="left:631px;top:195px;width:532px;height:505px;background:#3a3633;border-right:3.5px solid #0c0b0a;box-sizing:border-box;"></div><div class="t" style="left:660.0px;top:218.5px;font-size:40.58px;line-height:40.58px;color:#b4b0ac;font-family:'Liberation Sans',sans-serif;transform:scaleX(0.9387);">iCloud</div><div class="b" style="left:695px;top:281px;width:46px;height:46px;background:#b468d8;border-radius:9px;"></div><div class="b" style="left:695px;top:358px;width:46px;height:46px;background:#4aa7e3;border-radius:9px;"></div><svg class="b" style="left:695px;top:281px" width="46" height="46"><path d="M11 23 L20 33 L36 13" fill="none" stroke="#fff" stroke-width="4.5" stroke-linecap="round" stroke-linejoin="round"/></svg><svg class="b" style="left:695px;top:358px" width="46" height="46"><path d="M11 23 L20 33 L36 13" fill="none" stroke="#fff" stroke-width="4.5" stroke-linecap="round" stroke-linejoin="round"/></svg><div class="t" style="left:771.0px;top:281.0px;font-size:43.48px;line-height:43.48px;color:#cbc7c3;font-family:'Liberation Sans',sans-serif;transform:scaleX(0.9738);">Work</div><div class="t" style="left:771.0px;top:359.0px;font-size:43.48px;line-height:43.48px;color:#cbc7c3;font-family:'Liberation Sans',sans-serif;transform:scaleX(0.9659);">Home</div><div class="t" style="left:660.0px;top:461.4px;font-size:34.78px;line-height:34.78px;color:#aeaaa6;font-family:'Liberation Sans',sans-serif;transform:scaleX(1.1039);">kate@manager-tools.com</div><div class="t" style="left:1211.0px;top:225.8px;font-size:107.25px;line-height:107.25px;color:#e4e0dc;font-family:'Liberation Sans',sans-serif;font-weight:700;transform:scaleX(0.9319);">July</div><div class="t" style="left:1437.0px;top:225.8px;font-size:107.25px;line-height:107.25px;color:#e4e0dc;font-family:'Liberation Sans',sans-serif;transform:scaleX(0.9766);">2020</div><div class="b" style="left:3620px;top:250px;width:67px;height:60px;background:#5e5b58;border-radius:7px;"></div><div class="b" style="left:3691px;top:250px;width:201px;height:60px;background:#5e5b58;border-radius:7px;"></div><div class="b" style="left:3895px;top:250px;width:68px;height:60px;background:#5e5b58;border-radius:7px;"></div><svg class="b" style="left:3620px;top:250px" width="343" height="60"><path d="M40 18 L29 30 L40 42" fill="none" stroke="#dcd8d4" stroke-width="3.5"/><path d="M303 18 L314 30 L303 42" fill="none" stroke="#dcd8d4" stroke-width="3.5"/></svg><div class="t" style="left:3734.0px;top:259.0px;font-size:43.48px;line-height:43.48px;color:#e6e2de;font-family:'Liberation Sans',sans-serif;transform:scaleX(0.9828);">Today</div><div class="t" style="left:1515.0px;top:371.5px;font-size:59.42px;line-height:59.42px;color:#dcd8d4;font-family:'Liberation Sans',sans-serif;transform:scaleX(0.8440);">Wed 8</div><div class="t" style="left:2276.0px;top:371.5px;font-size:59.42px;line-height:59.42px;color:#dcd8d4;font-family:'Liberation Sans',sans-serif;transform:scaleX(0.7968);">Fri 10</div><div class="t" style="left:2644.0px;top:371.5px;font-size:59.42px;line-height:59.42px;color:#a6a29e;font-family:'Liberation Sans',sans-serif;transform:scaleX(0.7709);">Sat 11</div><div class="t" style="left:3004.0px;top:371.5px;font-size:59.42px;line-height:59.42px;color:#a6a29e;font-family:'Liberation Sans',sans-serif;transform:scaleX(0.7966);">Sun 12</div><div class="t" style="left:3370.0px;top:371.5px;font-size:59.42px;line-height:59.42px;color:#dcd8d4;font-family:'Liberation Sans',sans-serif;transform:scaleX(0.8276);">Mon 13</div><div class="t" style="left:3753.0px;top:371.5px;font-size:59.42px;line-height:59.42px;color:#dcd8d4;font-family:'Liberation Sans',sans-serif;transform:scaleX(0.7934);">Tue 14</div><div class="t" style="left:1865.0px;top:371.5px;font-size:59.42px;line-height:59.42px;color:#dcd8d4;font-family:'Liberation Sans',sans-serif;transform:scaleX(0.8303);">Thu</div><div class="b" style="left:1972px;top:360px;width:83px;height:83px;border-radius:42px;background:#e5523e"></div><div class="t" style="left:1996.0px;top:371.5px;font-size:59.42px;line-height:59.42px;color:#1b1b1b;font-family:'Liberation Sans',sans-serif;transform:scaleX(1.0591);">9</div><div class="b" style="left:1208px;top:452px;width:2799px;height:3px;background:#403c39;"></div><div class="t" style="left:1266.0px;top:469.5px;font-size:40.58px;line-height:40.58px;color:#6e6a66;font-family:'Liberation Sans',sans-serif;transform:scaleX(0.9620);">all-day</div><div class="b" style="left:1400px;top:461px;width:364px;height:49px;background:#463449;"></div><div class="b" style="left:1773px;top:461px;width:365px;height:49px;background:#463449;"></div><div class="b" style="left:2146px;top:455px;width:2px;height:55px;background:#3a3633;"></div><div class="b" style="left:2521px;top:461px;width:371px;height:49px;background:#463449;"></div><div class="b" style="left:2893px;top:461px;width:370px;height:49px;background:#463449;"></div><div class="b" style="left:3264px;top:461px;width:366px;height:49px;background:#463449;"></div><div class="b" style="left:3638px;top:461px;width:369px;height:49px;background:#463449;"></div><div class="b" style="left:2891px;top:455px;width:3px;height:55px;background:#3d3340;"></div><div class="b" style="left:3262px;top:455px;width:3px;height:55px;background:#3d3340;"></div><div class="b" style="left:3631px;top:455px;width:6px;height:55px;background:#2c2927;"></div><div class="t" style="left:1426.0px;top:464.3px;font-size:47.83px;line-height:47.83px;color:#c584de;font-family:'Liberation Sans',sans-serif;font-weight:700;transform:scaleX(0.8539);">ICE-A Virt EM...</div><div class="t" style="left:1795.0px;top:464.3px;font-size:47.83px;line-height:47.83px;color:#c584de;font-family:'Liberation Sans',sans-serif;font-weight:700;transform:scaleX(0.8657);">TVA Virt EMC...</div><div class="t" style="left:2550.0px;top:464.3px;font-size:47.83px;line-height:47.83px;color:#c584de;font-family:'Liberation Sans',sans-serif;font-weight:700;transform:scaleX(0.8444);">Mark - No Travel</div><div class="t" style="left:3666.0px;top:464.3px;font-size:47.83px;line-height:47.83px;color:#c584de;font-family:'Liberation Sans',sans-serif;font-weight:700;transform:scaleX(0.8203);">DCA EMC (K)</div><div class="b" style="left:4300px;top:783px;width:255px;height:1649px;background:linear-gradient(90deg,#24211f,#2e2a27);border-radius:0 14px 14px 0;box-shadow:0 0 0 1.5px #4a4643;"></div><div class="b" style="left:4300px;top:783px;width:255px;height:176px;background:#3a3633;border-radius:0 14px 0 0;border-bottom:3px solid #1a1816;box-sizing:border-box;"></div><div class="b" style="left:4350px;top:864px;width:179px;height:70px;background:#4a4643;border-radius:10px;"></div><div class="b" style="left:231px;top:502px;width:4183px;height:2346px;background:#fff;border-radius:14px;box-shadow:0 0 0 2px rgba(20,16,14,0.85), 0 10px 50px 12px rgba(0,0,0,0.4);overflow:hidden;"></div><div class="b" style="left:231px;top:502px;width:4183px;height:121px;background:linear-gradient(90deg,#6b6968 0%,#6d6a68 25%,#756560 32%,#7b5e53 36%,#7a5d51 40%,#6f6459 44%,#6a695c 49%,#6e6d66 60%,#72716f 75%,#6c6a69 90%,#6a6867 100%);border-radius:14px 14px 0 0;border-top:2px solid #9a9590;box-sizing:border-box;"></div><div class="b" style="left:231px;top:502px;width:4183px;height:121px;background:linear-gradient(180deg,rgba(255,255,255,0.07),rgba(255,255,255,0));border-radius:14px 14px 0 0;"></div><div class="b" style="left:272.5px;top:543.5px;width:39px;height:39px;border-radius:20px;background:#ec5b54"></div><div class="b" style="left:336.5px;top:543.5px;width:39px;height:39px;border-radius:20px;background:#ddbd3c"></div><div class="b" style="left:400.5px;top:543.5px;width:39px;height:39px;border-radius:20px;background:#5cbd41"></div><div class="b" style="left:481px;top:529px;width:80px;height:69px;background:linear-gradient(180deg,rgba(255,255,255,0.36),rgba(255,255,255,0.28));border-radius:10px;"></div><div class="b" style="left:565px;top:529px;width:79px;height:69px;background:linear-gradient(180deg,rgba(255,255,255,0.36),rgba(255,255,255,0.28));border-radius:10px;"></div><div class="b" style="left:676px;top:529px;width:118px;height:69px;background:linear-gradient(180deg,rgba(255,255,255,0.36),rgba(255,255,255,0.28));border-radius:10px;"></div><div class="b" style="left:1334px;top:528px;width:118px;height:70px;background:linear-gradient(180deg,rgba(255,255,255,0.36),rgba(255,255,255,0.28));border-radius:10px;"></div><div class="b" style="left:3982px;top:528px;width:116px;height:70px;background:linear-gradient(180deg,rgba(255,255,255,0.36),rgba(255,255,255,0.28));border-radius:10px;"></div><div class="b" style="left:4126px;top:528px;width:117px;height:70px;background:linear-gradient(180deg,rgba(255,255,255,0.36),rgba(255,255,255,0.28));border-radius:10px;"></div><div class="b" style="left:4269px;top:528px;width:118px;height:70px;background:linear-gradient(180deg,rgba(255,255,255,0.36),rgba(255,255,255,0.28));border-radius:10px;"></div><svg class="b" style="left:231px;top:502px" width="4183" height="120" viewBox="0 0 4183 120">
<path d="M301 43 L280 60.5 L301 78" fill="none" stroke="#fff" stroke-width="5" stroke-linecap="round" stroke-linejoin="round"/>
<path d="M364 43 L384 60.5 L364 78" fill="none" stroke="#c9c6c4" stroke-width="4.5" stroke-linecap="round" stroke-linejoin="round"/>
<rect x="481" y="43" width="47" height="37" fill="none" stroke="#fff" stroke-width="3.2"/>
<path d="M495 43 L495 80" stroke="#fff" stroke-width="3"/>
<path d="M485 50 L491 50 M485 56 L491 56 M485 62 L491 62" stroke="#fff" stroke-width="2.5"/>
<circle cx="1162" cy="61" r="24" fill="none" stroke="#fff" stroke-width="4.5"/>
<circle cx="1162" cy="61" r="15" fill="none" stroke="#fff" stroke-width="4"/>
<rect x="1159" y="50" width="6" height="22" fill="#fff"/>
<circle cx="3809" cy="61" r="22" fill="#fff"/>
<path d="M3809 48 L3809 71 M3800 63 L3809 72 L3818 63" fill="none" stroke="#8a8887" stroke-width="5" stroke-linecap="round" stroke-linejoin="round"/>
<path d="M3947 52 L3937 52 L3937 86 L3970 86 L3970 52 L3960 52" fill="none" stroke="#fff" stroke-width="3.5"/>
<path d="M3953.5 70 L3953.5 32 M3943 42 L3953.5 31 L3964 42" fill="none" stroke="#fff" stroke-width="3.5"/>
<rect x="4077" y="60" width="26" height="26" fill="none" stroke="#fff" stroke-width="3.5"/>
<path d="M4087 60 L4087 49 L4113 49 L4113 75 L4103 75" fill="none" stroke="#fff" stroke-width="3.5"/>
</svg><div class="b" style="left:1478px;top:528px;width:1687px;height:70px;background:linear-gradient(90deg,#a29e9b 0%,#9e928d 15%,#9a857b 30%,#968a7f 42%,#8f8e80 55%,#979590 75%,#9d9b98 100%);border-radius:10px;"></div><svg class="b" style="left:2120px;top:540px" width="40" height="45"><path d="M11 20 L11 13 A8 8 0 0 1 27 13 L27 20" fill="none" stroke="#fff" stroke-width="4"/><rect x="7" y="19" width="24" height="20" rx="2" fill="#fff"/></svg><div class="t" style="left:2170.0px;top:541.0px;font-size:43.48px;line-height:43.48px;color:#fff;font-family:'Liberation Sans',sans-serif;transform:scaleX(0.9353);">manager-tools.com</div><svg class="b" style="left:3100px;top:533px" width="60" height="60"><path d="M40 22 A17 17 0 1 0 44 36" fill="none" stroke="#fff" stroke-width="4"/><path d="M33 12 L44 21 L33 29 Z" fill="#fff"/></svg><div class="b" style="left:231px;top:621px;width:4183px;height:82px;background:linear-gradient(90deg,#6b6968 0%,#6d6a68 25%,#756560 32%,#7b5e53 36%,#7a5d51 40%,#6f6459 44%,#6a695c 49%,#6e6d66 60%,#72716f 75%,#6c6a69 90%,#6a6867 100%);border-top:2px solid #8e8883;box-sizing:border-box;"></div><div class="b" style="left:231px;top:623px;width:4183px;height:80px;background:rgba(0,0,0,0.06);"></div><div class="b" style="left:231px;top:623px;width:112px;height:80px;background:#353433;"></div><div class="b" style="left:2342px;top:623px;width:1996px;height:80px;background:#363531;"></div><div class="b" style="left:4338px;top:623px;width:76px;height:80px;background:#3d3c3a;"></div><div class="b" style="left:341px;top:623px;width:2px;height:80px;background:#2a2928;"></div><div class="b" style="left:2340px;top:625px;width:3px;height:78px;background:#858378;"></div><div class="b" style="left:4336px;top:623px;width:3px;height:80px;background:#2a2928;"></div><svg class="b" style="left:262px;top:644px" width="50" height="40"><rect x="3" y="2" width="44" height="35" rx="4" fill="#e8e8e8"/><path d="M3 6 L25 23 L47 6 L47 37 L39 37 L39 16 L25 27 L11 16 L11 37 L3 37 Z" fill="#d8443a"/></svg><div class="t" style="left:1064.0px;top:644.2px;font-size:36.23px;line-height:36.23px;color:#fff;font-family:'Liberation Sans',sans-serif;font-weight:700;transform:scaleX(0.9704);">Enterprise Portal | Manager Tools</div><div class="t" style="left:3070.0px;top:644.2px;font-size:36.23px;line-height:36.23px;color:#bfbcb8;font-family:'Liberation Sans',sans-serif;transform:scaleX(1.0412);">Virtual Cypress - Google Sheets</div><div class="b" style="left:4360px;top:661px;width:28px;height:3px;background:#8b8884;"></div><div class="b" style="left:4372px;top:649px;width:3px;height:28px;background:#8b8884;"></div><div class="b" style="left:0;top:0;width:4604px;height:2880px;clip-path:inset(703px 190px 32px 231px round 0 0 14px 14px)"><div class="b" style="left:231px;top:703px;width:4183px;height:2145px;background:#fff;border-radius:0 0 14px 14px;"></div><div class="b" style="left:231px;top:799px;width:109px;height:2049px;background:linear-gradient(90deg,#efefef,#f9f9f9 55%,rgba(255,255,255,0));"></div><div class="b" style="left:231px;top:703px;width:4160px;height:97px;background:linear-gradient(180deg,#0e0e0e 0%,#141414 62%,#1c1c1c 75%,#2e2e2e 100%);"></div><svg class="b" style="left:255px;top:712px" width="56" height="40"><circle cx="27" cy="12" r="6" fill="#f0a850"/><circle cx="12" cy="28" r="6" fill="#6a9ab8"/><circle cx="27" cy="28" r="6" fill="#6a9ab8"/><circle cx="42" cy="28" r="6" fill="#6a9ab8"/></svg><div class="b" style="left:334px;top:705px;width:2px;height:62px;background:#2e2e2e;"></div><div class="b" style="left:694px;top:705px;width:2px;height:62px;background:#2e2e2e;"></div><div class="b" style="left:861px;top:705px;width:2px;height:62px;background:#2e2e2e;"></div><div class="b" style="left:1042px;top:705px;width:2px;height:62px;background:#2e2e2e;"></div><div class="b" style="left:1167px;top:705px;width:2px;height:62px;background:#2e2e2e;"></div><div class="b" style="left:1386px;top:705px;width:2px;height:62px;background:#2e2e2e;"></div><div class="b" style="left:1534px;top:705px;width:2px;height:62px;background:#2e2e2e;"></div><div class="b" style="left:1705px;top:705px;width:2px;height:62px;background:#2e2e2e;"></div><div class="b" style="left:1952px;top:705px;width:2px;height:62px;background:#2e2e2e;"></div><div class="b" style="left:2112px;top:705px;width:2px;height:62px;background:#2e2e2e;"></div><div class="b" style="left:2443px;top:705px;width:2px;height:62px;background:#2e2e2e;"></div><div class="b" style="left:2622px;top:705px;width:2px;height:62px;background:#2e2e2e;"></div><div class="b" style="left:2798px;top:705px;width:2px;height:62px;background:#2e2e2e;"></div><div class="b" style="left:3191px;top:705px;width:2px;height:62px;background:#2e2e2e;"></div><div class="b" style="left:3486px;top:705px;width:2px;height:62px;background:#2e2e2e;"></div><div class="b" style="left:3797px;top:705px;width:2px;height:62px;background:#2e2e2e;"></div><div class="b" style="left:3984px;top:705px;width:2px;height:62px;background:#2e2e2e;"></div><div class="b" style="left:4230px;top:705px;width:2px;height:62px;background:#2e2e2e;"></div><div class="t" style="left:363.0px;top:718.6px;font-size:34.06px;line-height:34.06px;color:#f0f0f0;font-family:'Liberation Sans',sans-serif;transform:scaleX(0.9333);">Manager Tools Admin</div><div class="t" style="left:722.0px;top:718.6px;font-size:34.06px;line-height:34.06px;color:#f0f0f0;font-family:'Liberation Sans',sans-serif;transform:scaleX(0.9308);">Content</div><div class="t" style="left:888.0px;top:718.6px;font-size:34.06px;line-height:34.06px;color:#f0f0f0;font-family:'Liberation Sans',sans-serif;transform:scaleX(0.9121);">Structure</div><div class="t" style="left:1070.0px;top:718.6px;font-size:34.06px;line-height:34.06px;color:#f0f0f0;font-family:'Liberation Sans',sans-serif;transform:scaleX(0.8723);">Store</div><div class="t" style="left:1197.0px;top:718.6px;font-size:34.06px;line-height:34.06px;color:#f0f0f0;font-family:'Liberation Sans',sans-serif;transform:scaleX(0.8768);">Appearance</div><div class="t" style="left:1415.0px;top:718.6px;font-size:34.06px;line-height:34.06px;color:#f0f0f0;font-family:'Liberation Sans',sans-serif;transform:scaleX(0.8584);">People</div><div class="t" style="left:1562.0px;top:718.6px;font-size:34.06px;line-height:34.06px;color:#f0f0f0;font-family:'Liberation Sans',sans-serif;transform:scaleX(0.8935);">Modules</div><div class="t" style="left:1733.0px;top:718.6px;font-size:34.06px;line-height:34.06px;color:#f0f0f0;font-family:'Liberation Sans',sans-serif;transform:scaleX(0.9529);">Configuration</div><div class="t" style="left:1980.0px;top:718.6px;font-size:34.06px;line-height:34.06px;color:#f0f0f0;font-family:'Liberation Sans',sans-serif;transform:scaleX(0.8891);">Reports</div><div class="t" style="left:2140.0px;top:718.6px;font-size:34.06px;line-height:34.06px;color:#f0f0f0;font-family:'Liberation Sans',sans-serif;transform:scaleX(0.9196);">Conference Interest</div><div class="t" style="left:2471.0px;top:718.6px;font-size:34.06px;line-height:34.06px;color:#f0f0f0;font-family:'Liberation Sans',sans-serif;transform:scaleX(0.8669);">DiSC List</div><div class="t" style="left:2649.0px;top:718.6px;font-size:34.06px;line-height:34.06px;color:#f0f0f0;font-family:'Liberation Sans',sans-serif;transform:scaleX(0.8202);">MTDISCs</div><div class="t" style="left:2826.0px;top:718.6px;font-size:34.06px;line-height:34.06px;color:#f0f0f0;font-family:'Liberation Sans',sans-serif;transform:scaleX(0.9233);">Recent Attendee Activity</div><div class="t" style="left:3220.0px;top:718.6px;font-size:34.06px;line-height:34.06px;color:#f0f0f0;font-family:'Liberation Sans',sans-serif;transform:scaleX(0.8877);">MT Engagements</div><div class="t" style="left:3826.0px;top:718.6px;font-size:34.06px;line-height:34.06px;color:#f0f0f0;font-family:'Liberation Sans',sans-serif;transform:scaleX(0.9861);">50 / 7</div><div class="t" style="left:4012.0px;top:718.6px;font-size:34.06px;line-height:34.06px;color:#f0f0f0;font-family:'Liberation Sans',sans-serif;transform:scaleX(0.9259);">katehorstman</div><div class="t" style="left:4259.0px;top:718.6px;font-size:34.06px;line-height:34.06px;color:#f0f0f0;font-family:'Liberation Sans',sans-serif;transform:scaleX(0.9330);">Log out</div><svg class="b" style="left:3910px;top:705px;filter:blur(0.8px)" width="65" height="65"><g fill="#bdbdbd"><circle cx="22" cy="16" r="8"/><path d="M8 48 C8 26 36 26 36 48 Z"/></g><g fill="#d2d2d2"><circle cx="41" cy="25" r="8.5"/><path d="M26 55 C26 34 55 34 55 55 Z"/></g></svg><div class="b" style="left:4391px;top:703px;width:23px;height:2145px;background:#fff;"></div><div class="b" style="left:3886px;top:772px;width:505px;height:68px;background:#fff;border-radius:16px 16px 0 0;"></div><div class="t" style="left:3899.0px;top:786.1px;font-size:30.43px;line-height:30.43px;color:#9a9a9a;font-family:'Liberation Sans',sans-serif;transform:scaleX(1.0271);">Search</div><div class="b" style="left:4391px;top:1705px;width:22px;height:387px;background:#858585;border-radius:11px;"></div><div class="b" style="left:0;top:0;width:4604px;height:2880px;clip-path:inset(799px 0 1923px 0)"><div class="b" style="left:797px;top:842px;width:2996px;height:79px;background:#f4f5f7;"></div><div class="b" style="left:1664px;top:760px;width:467px;height:200px;background:#ee7c62;"></div><div class="b" style="left:2131px;top:760px;width:305px;height:82px;background:#ee7c62;"></div><div class="b" style="left:2436px;top:760px;width:307px;height:82px;background:#ee7c62;"></div><div class="b" style="left:2131px;top:842px;width:305px;height:118px;background:#b9c999;"></div><div class="b" style="left:2436px;top:842px;width:307px;height:118px;background:#b9c999;"></div><div class="b" style="left:797px;top:761px;width:2997px;height:3px;background:#c6c6c6;"></div><div class="b" style="left:797px;top:841px;width:2997px;height:3px;background:#c6c6c6;"></div><div class="b" style="left:797px;top:920px;width:2997px;height:3px;background:#c6c6c6;"></div><div class="b" style="left:797px;top:957px;width:2997px;height:3px;background:#c6c6c6;"></div><div class="b" style="left:796px;top:760px;width:3px;height:200px;background:#c6c6c6;"></div><div class="b" style="left:1213px;top:760px;width:3px;height:200px;background:#c6c6c6;"></div><div class="b" style="left:1663px;top:760px;width:3px;height:200px;background:#c6c6c6;"></div><div class="b" style="left:2130px;top:760px;width:3px;height:200px;background:#c6c6c6;"></div><div class="b" style="left:2435px;top:760px;width:3px;height:200px;background:#c6c6c6;"></div><div class="b" style="left:2742px;top:760px;width:3px;height:200px;background:#c6c6c6;"></div><div class="b" style="left:3152px;top:760px;width:3px;height:200px;background:#c6c6c6;"></div><div class="b" style="left:3669px;top:760px;width:3px;height:200px;background:#c6c6c6;"></div><div class="b" style="left:3791px;top:760px;width:3px;height:200px;background:#c6c6c6;"></div><div class="b" style="left:1234px;top:760px;width:339px;height:163px;background:#fff;"></div><div class="t" style="left:826.0px;top:781.3px;font-size:42.03px;line-height:42.03px;color:#1d1d2b;font-family:'Liberation Sans',sans-serif;transform:scaleX(0.8802);">2020-07-09 10:00</div><div class="t" style="left:1867.0px;top:781.3px;font-size:42.03px;line-height:42.03px;color:#fff;font-family:'Liberation Sans',sans-serif;transform:scaleX(0.7914);">Red</div><div class="t" style="left:2159.0px;top:781.3px;font-size:42.03px;line-height:42.03px;color:#fff;font-family:'Liberation Sans',sans-serif;transform:scaleX(0.7914);">Red</div><div class="t" style="left:2464.0px;top:781.3px;font-size:42.03px;line-height:42.03px;color:#fff;font-family:'Liberation Sans',sans-serif;transform:scaleX(0.7914);">Red</div><div class="t" style="left:2771.0px;top:781.3px;font-size:42.03px;line-height:42.03px;color:#1d1d2b;font-family:'Liberation Sans',sans-serif;transform:scaleX(0.8887);">2020-06-28</div><div class="t" style="left:3181.0px;top:781.3px;font-size:42.03px;line-height:42.03px;color:#1d1d2b;font-family:'Liberation Sans',sans-serif;transform:scaleX(0.8887);">2019-05-13</div><div class="t" style="left:826.0px;top:861.3px;font-size:42.03px;line-height:42.03px;color:#1d1d2b;font-family:'Liberation Sans',sans-serif;transform:scaleX(0.8802);">2020-07-09 10:00</div><div class="t" style="left:1867.0px;top:861.3px;font-size:42.03px;line-height:42.03px;color:#fff;font-family:'Liberation Sans',sans-serif;transform:scaleX(0.7914);">Red</div><div class="t" style="left:2159.0px;top:861.3px;font-size:42.03px;line-height:42.03px;color:#fff;font-family:'Liberation Sans',sans-serif;transform:scaleX(0.8477);">Green</div><div class="t" style="left:2464.0px;top:861.3px;font-size:42.03px;line-height:42.03px;color:#fff;font-family:'Liberation Sans',sans-serif;transform:scaleX(0.8392);">Green</div><div class="t" style="left:2771.0px;top:861.3px;font-size:42.03px;line-height:42.03px;color:#1d1d2b;font-family:'Liberation Sans',sans-serif;transform:scaleX(0.8887);">2020-06-28</div><div class="t" style="left:3181.0px;top:861.3px;font-size:42.03px;line-height:42.03px;color:#1d1d2b;font-family:'Liberation Sans',sans-serif;transform:scaleX(0.8887);">2019-02-04</div><div class="t" style="left:826.0px;top:941.3px;font-size:42.03px;line-height:42.03px;color:#1d1d2b;font-family:'Liberation Sans',sans-serif;transform:scaleX(0.8802);">2020-07-09 10:00</div><div class="t" style="left:1867.0px;top:941.3px;font-size:42.03px;line-height:42.03px;color:#fff;font-family:'Liberation Sans',sans-serif;transform:scaleX(0.7914);">Red</div><div class="t" style="left:2159.0px;top:941.3px;font-size:42.03px;line-height:42.03px;color:#fff;font-family:'Liberation Sans',sans-serif;transform:scaleX(0.8477);">Green</div><div class="t" style="left:2464.0px;top:941.3px;font-size:42.03px;line-height:42.03px;color:#fff;font-family:'Liberation Sans',sans-serif;transform:scaleX(0.8392);">Green</div><div class="t" style="left:2771.0px;top:941.3px;font-size:42.03px;line-height:42.03px;color:#1d1d2b;font-family:'Liberation Sans',sans-serif;transform:scaleX(0.8887);">2020-06-28</div><div class="t" style="left:3181.0px;top:941.3px;font-size:42.03px;line-height:42.03px;color:#1d1d2b;font-family:'Liberation Sans',sans-serif;transform:scaleX(0.8887);">2019-06-25</div><div class="t" style="left:1243.0px;top:947.3px;font-size:42.03px;line-height:42.03px;color:#1d1d2b;font-family:'Liberation Sans',sans-serif;transform:scaleX(0.8793);">Karen Morrow</div></div><div class="b" style="left:797px;top:957px;width:2997px;height:3px;background:#c6c6c6;"></div><div class="b" style="left:731px;top:1001px;width:3103px;height:3px;background:#dfe2e8;"></div><div class="b" style="left:3832px;top:799px;width:3px;height:2049px;background:#e2e4ea;"></div><div class="b" style="left:731px;top:2536px;width:3103px;height:3px;background:#dfe2e8;"></div><div class="b" style="left:2297px;top:2537px;width:3px;height:311px;background:#e2e4ea;"></div><div class="t" style="left:802.0px;top:1038.0px;font-size:50.00px;line-height:50.00px;color:#111;font-family:'Liberation Sans',sans-serif;transform:scaleX(0.9328);">Cohort Feedback Averages (Active Seat Holders)</div><div class="b" style="left:914px;top:2350px;width:2401px;height:3px;background:#b5b5b5;"></div><div class="t" style="left:872.0px;top:2340.8px;font-size:32.61px;line-height:32.61px;color:#2b2d42;font-family:'Liberation Sans',sans-serif;transform:scaleX(0.8269);">0</div><div class="b" style="left:914px;top:2169px;width:2401px;height:2px;background:#b5b5b5;"></div><div class="t" style="left:874.5px;top:2159.8px;font-size:32.61px;line-height:32.61px;color:#2b2d42;font-family:'Liberation Sans',sans-serif;transform:scaleX(0.5512);">1</div><div class="b" style="left:914px;top:1989px;width:2401px;height:2px;background:#b5b5b5;"></div><div class="t" style="left:872.0px;top:1979.8px;font-size:32.61px;line-height:32.61px;color:#2b2d42;font-family:'Liberation Sans',sans-serif;transform:scaleX(0.8269);">2</div><div class="b" style="left:914px;top:1808px;width:2401px;height:2px;background:#b5b5b5;"></div><div class="t" style="left:872.0px;top:1798.8px;font-size:32.61px;line-height:32.61px;color:#2b2d42;font-family:'Liberation Sans',sans-serif;transform:scaleX(0.8269);">3</div><div class="b" style="left:914px;top:1627px;width:2401px;height:2px;background:#b5b5b5;"></div><div class="t" style="left:872.0px;top:1617.8px;font-size:32.61px;line-height:32.61px;color:#2b2d42;font-family:'Liberation Sans',sans-serif;transform:scaleX(0.8269);">4</div><div class="b" style="left:914px;top:1447px;width:2401px;height:2px;background:#b5b5b5;"></div><div class="t" style="left:872.0px;top:1437.8px;font-size:32.61px;line-height:32.61px;color:#2b2d42;font-family:'Liberation Sans',sans-serif;transform:scaleX(0.8269);">5</div><div class="b" style="left:914px;top:1266px;width:2401px;height:2px;background:#b5b5b5;"></div><div class="t" style="left:872.0px;top:1256.8px;font-size:32.61px;line-height:32.61px;color:#2b2d42;font-family:'Liberation Sans',sans-serif;transform:scaleX(0.8269);">6</div><svg class="b" style="left:0;top:0" width="4604" height="2880" viewBox="0 0 4604 2880"><rect x="959.5" y="2314.0" width="28.5" height="36.0" fill="#82b5f6"/><rect x="995.0" y="2339.0" width="28.5" height="11.0" fill="#82b5f6"/><rect x="1034.0" y="2294.0" width="28.5" height="56.0" fill="#82b5f6"/><rect x="1068.5" y="2328.6" width="28.5" height="21.4" fill="#82b5f6"/><rect x="1107.0" y="2328.6" width="28.5" height="21.4" fill="#82b5f6"/><rect x="1142.0" y="2265.7" width="28.5" height="84.3" fill="#82b5f6"/><rect x="1181.0" y="2224.0" width="28.5" height="126.0" fill="#82b5f6"/><rect x="1216.0" y="2287.0" width="28.5" height="63.0" fill="#82b5f6"/><rect x="1254.0" y="2202.0" width="28.5" height="148.0" fill="#82b5f6"/><rect x="1289.0" y="2161.0" width="28.5" height="189.0" fill="#82b5f6"/><rect x="1328.0" y="2202.0" width="28.5" height="148.0" fill="#82b5f6"/><rect x="1363.0" y="2065.6" width="28.5" height="284.4" fill="#82b5f6"/><rect x="1401.0" y="2192.0" width="28.5" height="158.0" fill="#82b5f6"/><rect x="1440.0" y="2202.0" width="28.5" height="148.0" fill="#82b5f6"/><rect x="1475.0" y="2043.7" width="28.5" height="306.3" fill="#82b5f6"/><rect x="1513.5" y="1895.6" width="28.5" height="454.4" fill="#82b5f6"/><rect x="1548.6" y="2076.0" width="28.5" height="274.0" fill="#82b5f6"/><rect x="1587.0" y="1873.7" width="28.5" height="476.3" fill="#82b5f6"/><rect x="1622.0" y="1873.7" width="28.5" height="476.3" fill="#82b5f6"/><rect x="1660.5" y="2107.0" width="28.5" height="243.0" fill="#82b5f6"/><rect x="1696.0" y="1989.5" width="28.5" height="360.5" fill="#82b5f6"/><rect x="1734.0" y="2033.0" width="28.5" height="317.0" fill="#82b5f6"/><rect x="1769.0" y="2011.0" width="28.5" height="339.0" fill="#82b5f6"/><rect x="1808.0" y="2054.6" width="28.5" height="295.4" fill="#82b5f6"/><rect x="1843.0" y="2043.7" width="28.5" height="306.3" fill="#82b5f6"/><rect x="1881.0" y="2000.0" width="28.5" height="350.0" fill="#82b5f6"/><rect x="1916.0" y="2065.6" width="28.5" height="284.4" fill="#82b5f6"/><rect x="1955.0" y="1904.6" width="28.5" height="445.4" fill="#82b5f6"/><rect x="1990.0" y="1715.0" width="28.5" height="635.0" fill="#82b5f6"/><rect x="2028.6" y="1480.0" width="28.5" height="870.0" fill="#82b5f6"/><rect x="2067.0" y="1661.0" width="28.5" height="689.0" fill="#82b5f6"/><rect x="2102.0" y="1672.0" width="28.5" height="678.0" fill="#82b5f6"/><rect x="2140.6" y="1926.0" width="28.5" height="424.0" fill="#82b5f6"/><rect x="2175.6" y="1724.0" width="28.5" height="626.0" fill="#82b5f6"/><rect x="2214.0" y="1428.0" width="28.5" height="922.0" fill="#82b5f6"/><rect x="2249.0" y="1502.0" width="28.5" height="848.0" fill="#82b5f6"/><rect x="2287.7" y="2245.7" width="28.5" height="104.3" fill="#82b5f6"/><rect x="2322.7" y="1989.5" width="28.5" height="360.5" fill="#82b5f6"/><rect x="2361.0" y="1715.0" width="28.5" height="635.0" fill="#82b5f6"/><rect x="2396.5" y="1628.0" width="28.5" height="722.0" fill="#82b5f6"/><rect x="2435.0" y="1926.0" width="28.5" height="424.0" fill="#82b5f6"/><rect x="2470.0" y="1947.0" width="28.5" height="403.0" fill="#82b5f6"/><rect x="2508.0" y="1661.0" width="28.5" height="689.0" fill="#82b5f6"/><rect x="2543.5" y="1808.5" width="28.5" height="541.5" fill="#82b5f6"/><rect x="2582.0" y="1808.5" width="28.5" height="541.5" fill="#82b5f6"/><rect x="2617.0" y="1724.0" width="28.5" height="626.0" fill="#82b5f6"/><rect x="2656.0" y="1830.0" width="28.5" height="520.0" fill="#82b5f6"/><rect x="2691.0" y="1904.0" width="28.5" height="446.0" fill="#82b5f6"/><rect x="2729.0" y="2107.0" width="28.5" height="243.0" fill="#82b5f6"/><rect x="2764.0" y="1970.0" width="28.5" height="380.0" fill="#82b5f6"/><rect x="2803.0" y="1947.0" width="28.5" height="403.0" fill="#82b5f6"/><rect x="2838.0" y="1989.5" width="28.5" height="360.5" fill="#82b5f6"/><rect x="2876.6" y="1873.7" width="28.5" height="476.3" fill="#82b5f6"/><rect x="2915.0" y="1682.6" width="28.5" height="667.4" fill="#82b5f6"/><rect x="2950.0" y="1226.0" width="28.5" height="1124.0" fill="#82b5f6"/><rect x="2988.6" y="1147.0" width="28.5" height="1203.0" fill="#82b5f6"/><rect x="3023.6" y="1147.0" width="28.5" height="1203.0" fill="#82b5f6"/><rect x="3062.0" y="1147.0" width="28.5" height="1203.0" fill="#82b5f6"/><rect x="3097.0" y="1147.0" width="28.5" height="1203.0" fill="#82b5f6"/><rect x="3136.0" y="1174.0" width="28.5" height="1176.0" fill="#82b5f6"/><rect x="3171.0" y="1147.0" width="28.5" height="1203.0" fill="#82b5f6"/><rect x="3209.0" y="1147.0" width="28.5" height="1203.0" fill="#82b5f6"/><rect x="3244.5" y="1147.0" width="28.5" height="1203.0" fill="#82b5f6"/><rect x="3283.0" y="1147.0" width="28.5" height="1203.0" fill="#82b5f6"/><rect x="937" y="1445.5" width="2362" height="5" fill="#b8c898"/></svg><div class="b" style="left:1062px;top:2352px;width:2px;height:13px;background:#b5b5b5;"></div><div class="t" style="left:1006.5px;top:2365.2px;font-size:36.23px;line-height:36.23px;color:#2b2d42;font-family:'Liberation Sans',sans-serif;transform:scaleX(0.8991);">May &#x27;19</div><div class="b" style="left:1386px;top:2352px;width:2px;height:13px;background:#b5b5b5;"></div><div class="t" style="left:1337.5px;top:2365.2px;font-size:36.23px;line-height:36.23px;color:#2b2d42;font-family:'Liberation Sans',sans-serif;transform:scaleX(0.9558);">Jul &#x27;19</div><div class="b" style="left:1712px;top:2352px;width:2px;height:13px;background:#b5b5b5;"></div><div class="t" style="left:1658.0px;top:2365.2px;font-size:36.23px;line-height:36.23px;color:#2b2d42;font-family:'Liberation Sans',sans-serif;transform:scaleX(0.9037);">Sep &#x27;19</div><div class="b" style="left:2032px;top:2352px;width:2px;height:13px;background:#b5b5b5;"></div><div class="t" style="left:1978.0px;top:2365.2px;font-size:36.23px;line-height:36.23px;color:#2b2d42;font-family:'Liberation Sans',sans-serif;transform:scaleX(0.9040);">Nov &#x27;19</div><div class="b" style="left:2355px;top:2352px;width:2px;height:13px;background:#b5b5b5;"></div><div class="t" style="left:2301.5px;top:2365.2px;font-size:36.23px;line-height:36.23px;color:#2b2d42;font-family:'Liberation Sans',sans-serif;transform:scaleX(0.9423);">Jan &#x27;20</div><div class="b" style="left:2670px;top:2352px;width:2px;height:13px;background:#b5b5b5;"></div><div class="t" style="left:2614.5px;top:2365.2px;font-size:36.23px;line-height:36.23px;color:#2b2d42;font-family:'Liberation Sans',sans-serif;transform:scaleX(0.9445);">Mar &#x27;20</div><div class="b" style="left:2990px;top:2352px;width:2px;height:13px;background:#b5b5b5;"></div><div class="t" style="left:2934.5px;top:2365.2px;font-size:36.23px;line-height:36.23px;color:#2b2d42;font-family:'Liberation Sans',sans-serif;transform:scaleX(0.8991);">May &#x27;20</div><div class="b" style="left:3277px;top:2352px;width:2px;height:13px;background:#b5b5b5;"></div><div class="t" style="left:3228.0px;top:2365.2px;font-size:36.23px;line-height:36.23px;color:#2b2d42;font-family:'Liberation Sans',sans-serif;transform:scaleX(0.9655);">Jul &#x27;20</div><div class="t" style="left:2064.0px;top:2426.7px;font-size:45.65px;line-height:45.65px;color:#2b2d42;font-family:'Liberation Sans',sans-serif;transform:scaleX(0.9150);">Week</div><div class="b" style="left:0;top:0;width:4604px;height:2880px;transform-origin:835px 1747px;transform:rotate(-90deg)"><div class="t" style="left:299.5px;top:1722.2px;font-size:48.55px;line-height:48.55px;color:#2b2d42;font-family:'Liberation Sans',sans-serif;transform:scaleX(0.8986);">Cohort Average Feedback Count  (Active Seat Holders)</div></div><div class="b" style="left:3348px;top:1148px;width:446px;height:164px;border:2px solid #e3e5ea;border-radius:7px;box-sizing:border-box;"></div><div class="b" style="left:3376px;top:1183px;width:51px;height:37px;background:#b8c898;border-radius:9px;"></div><div class="b" style="left:3376px;top:1240px;width:51px;height:38px;background:#82b5f6;border-radius:9px;"></div><div class="t" style="left:3444.0px;top:1183.8px;font-size:35.51px;line-height:35.51px;color:#2b2d42;font-family:'Liberation Sans',sans-serif;transform:scaleX(1.0905);">target</div><div class="t" style="left:3444.0px;top:1241.3px;font-size:35.51px;line-height:35.51px;color:#2b2d42;font-family:'Liberation Sans',sans-serif;transform:scaleX(1.0651);">feedback_count</div><div class="t" style="left:801.0px;top:2574.0px;font-size:50.00px;line-height:50.00px;color:#111;font-family:'Liberation Sans',sans-serif;transform:scaleX(0.9359);">Cohort Coaching Instance Count (Active Seat Holders)</div><div class="t" style="left:2343.0px;top:2574.0px;font-size:50.00px;line-height:50.00px;color:#111;font-family:'Liberation Sans',sans-serif;transform:scaleX(0.9415);">Cohort Delegation Instance Count (Active Seat Holders)</div><div class="b" style="left:844px;top:2683px;width:1053px;height:2px;background:#b5b5b5;"></div><div class="b" style="left:844px;top:2814px;width:1053px;height:2px;background:#b5b5b5;"></div><div class="t" style="left:801.0px;top:2673.8px;font-size:32.61px;line-height:32.61px;color:#2b2d42;font-family:'Liberation Sans',sans-serif;transform:scaleX(0.8820);">5</div><div class="t" style="left:801.0px;top:2806.8px;font-size:32.61px;line-height:32.61px;color:#2b2d42;font-family:'Liberation Sans',sans-serif;transform:scaleX(0.8820);">4</div><div class="b" style="left:2386px;top:2683px;width:1047px;height:2px;background:#b5b5b5;"></div><div class="t" style="left:2344.0px;top:2673.8px;font-size:32.61px;line-height:32.61px;color:#2b2d42;font-family:'Liberation Sans',sans-serif;transform:scaleX(0.8820);">8</div><svg class="b" style="left:0;top:0" width="4604" height="2880"><path d="M1418 2850 L1423 2815.5 L1897 2815.5" fill="none" stroke="#7e4fa6" stroke-width="5"/><path d="M3185 2849 L3433 2849" stroke="#7e4fa6" stroke-width="5"/></svg><div class="b" style="left:1928px;top:2684px;width:330px;height:216px;border:2px solid #e3e5ea;border-radius:7px;box-sizing:border-box;"></div><div class="b" style="left:1955px;top:2718px;width:51px;height:38px;background:#7e4fa6;border-radius:9px;"></div><div class="b" style="left:1955px;top:2777px;width:51px;height:37px;background:#7ecac0;border-radius:9px;"></div><div class="t" style="left:2024.0px;top:2720.3px;font-size:35.51px;line-height:35.51px;color:#2b2d42;font-family:'Liberation Sans',sans-serif;transform:scaleX(1.0521);">Begun</div><div class="t" style="left:2024.0px;top:2778.3px;font-size:35.51px;line-height:35.51px;color:#2b2d42;font-family:'Liberation Sans',sans-serif;transform:scaleX(1.0717);">Completed</div><div class="b" style="left:3463px;top:2684px;width:330px;height:216px;border:2px solid #e3e5ea;border-radius:7px;box-sizing:border-box;"></div><div class="b" style="left:3490px;top:2718px;width:51px;height:38px;background:#7e4fa6;border-radius:9px;"></div><div class="b" style="left:3490px;top:2777px;width:51px;height:37px;background:#7ecac0;border-radius:9px;"></div><div class="t" style="left:3559.0px;top:2720.3px;font-size:35.51px;line-height:35.51px;color:#2b2d42;font-family:'Liberation Sans',sans-serif;transform:scaleX(1.0521);">Begun</div><div class="t" style="left:3559.0px;top:2778.3px;font-size:35.51px;line-height:35.51px;color:#2b2d42;font-family:'Liberation Sans',sans-serif;transform:scaleX(1.0717);">Completed</div></div></body></html>
